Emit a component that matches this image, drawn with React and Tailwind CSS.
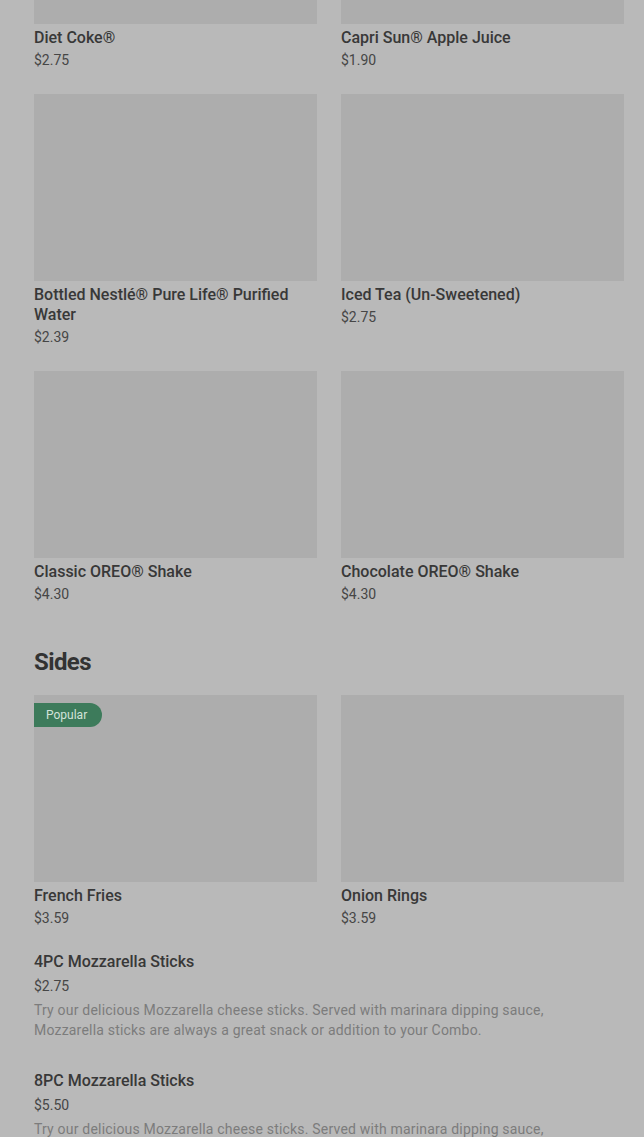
const drinks = [
  { name: 'Diet Coke®', price: '$2.75' },
  { name: 'Capri Sun® Apple Juice', price: '$1.90' },
  { name: 'Bottled Nestlé® Pure Life® Purified Water', price: '$2.39' },
  { name: 'Iced Tea (Un-Sweetened)', price: '$2.75' },
  { name: 'Classic OREO® Shake', price: '$4.30' },
  { name: 'Chocolate OREO® Shake', price: '$4.30' },
];

const sides = [
  { name: 'French Fries', price: '$3.59', popular: true },
  { name: 'Onion Rings', price: '$3.59' },
];

const mozz =
  'Try our delicious Mozzarella cheese sticks. Served with marinara dipping sauce, Mozzarella sticks are always a great snack or addition to your Combo.';

function Card({ item }) {
  return (
    <div className="flex flex-col">
      <div className="relative h-[187px] bg-[#adadad]">
        {item.popular && (
          <span className="absolute left-0 top-2 h-6 w-[68px] pl-3 flex items-center rounded-r-full bg-[#3d7b5b] text-xs text-[#d3e3da]">
            Popular
          </span>
        )}
      </div>
      <div className="mt-1 text-base leading-5 font-medium text-[#383838]">{item.name}</div>
      <div className="mt-[2px] text-sm leading-5 text-[#464646]">{item.price}</div>
    </div>
  );
}

function ListItem({ name, price, desc }) {
  return (
    <div className="flex flex-col">
      <div className="text-base leading-5 font-medium text-[#383838]">{name}</div>
      <div className="mt-[4px] text-sm leading-5 text-[#464646]">{price}</div>
      <p className="mt-1 pr-[80px] text-sm leading-5 tracking-[0.2px] text-[#7c7c7c]">{desc}</p>
    </div>
  );
}

export default function App() {
  return (
    <div
      className="min-h-[1137px] bg-[#b9b9b9] pl-[34px] pr-5 overflow-hidden"
      style={{ fontFamily: 'Roboto, "Liberation Sans", sans-serif' }}
    >
      {/* drinks grid, scrolled so the first row's images are mostly out of view */}
      <div className="-mt-[163px] grid grid-cols-2 gap-x-6 gap-y-6">
        {drinks.map((d) => (
          <Card key={d.name} item={d} />
        ))}
      </div>

      <h2 className="mt-[42px] mb-[17px] text-2xl leading-8 font-bold tracking-tight text-[#333333]">Sides</h2>

      <div className="grid grid-cols-2 gap-x-6">
        {sides.map((s) => (
          <Card key={s.name} item={s} />
        ))}
      </div>

      <div className="mt-[24px] flex flex-col gap-[31px]">
        <ListItem name="4PC Mozzarella Sticks" price="$2.75" desc={mozz} />
        <ListItem name="8PC Mozzarella Sticks" price="$5.50" desc={mozz} />
      </div>
    </div>
  );
}
